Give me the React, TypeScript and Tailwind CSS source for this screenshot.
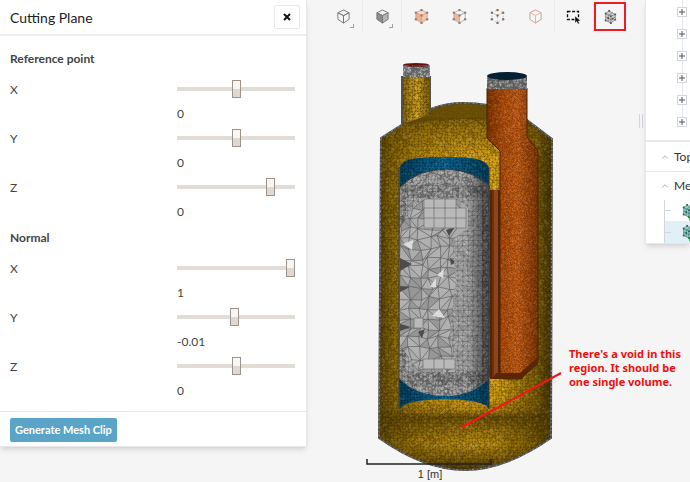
import { useState } from 'react';
import { ChevronUp } from 'lucide-react';

type Mesh = { lines: string; dark: string; light: string };

// Small seeded generator, so the mesh is the same on every render
function makeRandom(seed: number) {
	let s = seed;
	return () => {
		s = (s * 16807) % 2147483647;
		return s / 2147483647;
	};
}

function buildMesh(x0: number, y0: number, x1: number, y1: number, step: number, jitter: number, seed: number): Mesh {
	const rnd = makeRandom(seed);
	const cols = Math.ceil((x1 - x0) / step) + 1;
	const rows = Math.ceil((y1 - y0) / step) + 1;
	const points: string[][] = [];
	for (let r = 0; r < rows; r++) {
		const row: string[] = [];
		for (let c = 0; c < cols; c++) {
			const x = x0 + c * step + (rnd() - 0.5) * jitter * step;
			const y = y0 + r * step + (rnd() - 0.5) * jitter * step;
			row.push(`${x.toFixed(1)} ${y.toFixed(1)}`);
		}
		points.push(row);
	}
	const mesh: Mesh = { lines: '', dark: '', light: '' };
	for (let r = 0; r < rows - 1; r++) {
		for (let c = 0; c < cols - 1; c++) {
			const a = points[r][c];
			const b = points[r][c + 1];
			const d = points[r + 1][c];
			const e = points[r + 1][c + 1];
			const flip = rnd() > 0.5;
			mesh.lines += `M${d}L${a}L${b}` + (flip ? `M${a}L${e}` : `M${b}L${d}`);
			const triangles = flip ? [`M${a}L${b}L${e}Z`, `M${a}L${d}L${e}Z`] : [`M${a}L${b}L${d}Z`, `M${b}L${d}L${e}Z`];
			triangles.forEach((t) => {
				const v = rnd();
				if (v < 0.25) mesh.dark += t;
				else if (v > 0.72) mesh.light += t;
			});
		}
	}
	return mesh;
}

const goldMesh = buildMesh(376, 60, 556, 474, 3, 0.7, 11);
const orangeMesh = buildMesh(484, 84, 542, 384, 2, 0.6, 23);
const blueMesh = buildMesh(396, 154, 492, 412, 3, 0.5, 37);
const fineMesh = buildMesh(396, 60, 530, 400, 3, 0.8, 41);
const midMesh = buildMesh(398, 186, 494, 382, 5, 0.3, 59);
const coarseMesh = buildMesh(400, 198, 460, 372, 10, 0.6, 73);

const BODY = 'M381 138L403 124Q432 103 463 103Q500 103 527 120L552 139L551 438Q505 470 465 470Q424 470 379 438Z';
const CORE = 'M400 187Q418 169 447 169Q476 171 490 187V377Q474 396 445 396Q414 395 399 378Z';
const PIPE = 'M487 88H527V137L538 151V362L521 379H503L500 374V151L487 138Z';
const BLUE = 'M400 188V167Q402 159 420 158Q445 156 470 158Q488 160 489 169V188ZM399 375H489V409Q486 400 445 399Q402 400 400 409Z';
const SQUARES = 'M424 199H456V208H466V228H424ZM424 208H456M424 218H466M434 199V228M445 199V228M456 208V228M414 318H423V328H414ZM423 359H455V369H423ZM434 359V369M444 359V369';

function MeshFill({ mesh, clip, stroke, strokeWidth, strength }: {
	mesh: Mesh;
	clip: string;
	stroke: string;
	strokeWidth: number;
	strength: number;
}) {
	return (
		<g clipPath={`url(#${clip})`}>
			<path d={mesh.dark} fill="#000" opacity={strength} />
			<path d={mesh.light} fill="#fff" opacity={strength * 0.6} />
			<path d={mesh.lines} fill="none" stroke={stroke} strokeWidth={strokeWidth} />
		</g>
	);
}

function Vessel() {
	return (
		<svg viewBox="306 34 384 448" className="block h-[448px] w-[384px] max-w-none" role="img" aria-label="Clipped vessel mesh">
			<defs>
				<linearGradient id="gold" x1="379" x2="552" y1="0" y2="0" gradientUnits="userSpaceOnUse">
					<stop offset="0" stopColor="#5a4404" />
					<stop offset="0.08" stopColor="#8d6b06" />
					<stop offset="0.25" stopColor="#c8950c" />
					<stop offset="0.5" stopColor="#edb41a" />
					<stop offset="0.68" stopColor="#e6ad12" />
					<stop offset="0.9" stopColor="#8a6806" />
					<stop offset="1" stopColor="#443304" />
				</linearGradient>
				<linearGradient id="goldPipe">
					<stop offset="0" stopColor="#8a6808" />
					<stop offset="0.5" stopColor="#eab423" />
					<stop offset="1" stopColor="#7c5e08" />
				</linearGradient>
				<linearGradient id="orange" x1="487" x2="538" y1="0" y2="0" gradientUnits="userSpaceOnUse">
					<stop offset="0" stopColor="#8a3e05" />
					<stop offset="0.3" stopColor="#c85c0e" />
					<stop offset="0.6" stopColor="#e2701b" />
					<stop offset="1" stopColor="#8a3e06" />
				</linearGradient>
				<linearGradient id="blue" x1="399" x2="490" y1="0" y2="0" gradientUnits="userSpaceOnUse">
					<stop offset="0" stopColor="#054565" />
					<stop offset="0.5" stopColor="#0b72a6" />
					<stop offset="1" stopColor="#054565" />
				</linearGradient>
				<linearGradient id="coreShade" x1="399" x2="490" y1="0" y2="0" gradientUnits="userSpaceOnUse">
					<stop offset="0.75" stopColor="#000" stopOpacity="0" />
					<stop offset="0.92" stopColor="#000" stopOpacity="0.4" />
					<stop offset="1" stopColor="#000" stopOpacity="0.4" />
				</linearGradient>
				<linearGradient id="floor" x1="0" x2="0" y1="395" y2="470" gradientUnits="userSpaceOnUse">
					<stop offset="0" stopColor="#5d4503" stopOpacity="0" />
					<stop offset="0.2" stopColor="#5d4503" stopOpacity="0.3" />
					<stop offset="0.3" stopColor="#5d4503" stopOpacity="0.85" />
					<stop offset="0.42" stopColor="#5d4503" stopOpacity="0.6" />
					<stop offset="0.65" stopColor="#5d4503" stopOpacity="0.25" />
					<stop offset="1" stopColor="#463402" stopOpacity="0.95" />
				</linearGradient>
				<linearGradient id="crown" x1="0" x2="0" y1="118" y2="160" gradientUnits="userSpaceOnUse">
					<stop offset="0" stopColor="#6e5203" stopOpacity="0.75" />
					<stop offset="1" stopColor="#6e5203" stopOpacity="0" />
				</linearGradient>
				<clipPath id="bodyClip"><path d={BODY} /></clipPath>
				<clipPath id="neckClip"><path d="M402 77H431V114L403 124Z" /></clipPath>
				<clipPath id="coreClip"><path d={CORE} /></clipPath>
				<clipPath id="pipeClip"><path d={PIPE} /></clipPath>
				<clipPath id="blueClip"><path d={BLUE} /></clipPath>
				<clipPath id="capClip"><path d="M403 65H430V77H403ZM487 77H527V89H487Z" /></clipPath>
				<clipPath id="coarseClip"><path d="M400 228L413 208L424 198H456L468 208V228L452 240L456 280L450 330L456 372H420L400 345Z" /></clipPath>
			</defs>

			{/* Outer shell */}
			<path d={BODY} fill="url(#gold)" />
			<path d="M379 118H552V160H379Z" fill="url(#crown)" clipPath="url(#bodyClip)" />
			<path d="M379 395H552V470H379Z" fill="url(#floor)" clipPath="url(#bodyClip)" />
			<MeshFill mesh={goldMesh} clip="bodyClip" stroke="rgba(45,32,0,0.4)" strokeWidth={0.6} strength={0.13} />
			<path d="M402 125Q432 104 463 103Q500 103 527 120L534 128Q505 119 470 119Q425 119 402 125Z" fill="#5a4403" opacity="0.85" />
			<path d={BODY} fill="none" stroke="#4b4a46" strokeWidth="2" />
			<path d={BODY} fill="none" stroke="#999" strokeWidth="1" strokeDasharray="1 3 2 2" />

			{/* Left neck */}
			<path d="M402 77H431V114L403 124Z" fill="url(#goldPipe)" />
			<MeshFill mesh={goldMesh} clip="neckClip" stroke="rgba(45,32,0,0.5)" strokeWidth={0.6} strength={0.13} />
			<path d="M402 76V124M430 76V113" stroke="#555147" strokeWidth="2" />
			<path d="M403 65H430V77H403Z" fill="#b0b0b0" />
			<ellipse cx="416" cy="65" rx="13" ry="2" fill="#6d1010" />

			{/* Jacket and core */}
			<path d={BLUE} fill="url(#blue)" />
			<MeshFill mesh={blueMesh} clip="blueClip" stroke="rgba(0,22,38,0.5)" strokeWidth={0.6} strength={0.1} />
			<path d={CORE} fill="#adadad" />
			<MeshFill mesh={fineMesh} clip="coreClip" stroke="rgba(60,60,60,0.5)" strokeWidth={0.5} strength={0.3} />
			<path d="M406 198H482V372H406Z" fill="#b4b4b4" opacity="0.7" />
			<MeshFill mesh={midMesh} clip="coreClip" stroke="rgba(75,75,75,0.6)" strokeWidth={0.6} strength={0.08} />
			<g clipPath="url(#coarseClip)">
				<path d={CORE} fill="#acacac" />
				<MeshFill mesh={coarseMesh} clip="coreClip" stroke="#606060" strokeWidth={0.7} strength={0.12} />
				<path d="M400 258l12 6l-12 7zM400 286l10 1l-10 5zM400 324l11 3l-11 4zM446 230l9-3l-6 9zM450 258l6 4l-5 3zM418 332l7-3l-3 9z" fill="#4c4c4c" />
				<path d="M403 244l10-4l-1 10zM437 275l7-6l-1 9zM430 287l6-9v9zM432 316l7-7l6 9z" fill="#dcdcdc" />
			</g>
			<path d={SQUARES} fill="#b9b9b9" stroke="#707070" strokeWidth="0.7" />
			<path d={CORE} fill="url(#coreShade)" />
			<path d="M400 187Q418 169 447 169Q476 171 490 187" fill="none" stroke="#333" strokeWidth="1" />
			<path d="M399 167V409M489 167V409" stroke="#3d3d3d" strokeWidth="1" />

			{/* Right pipe */}
			<path d="M490 190H501V374L506 379H490Z" fill="#6d3009" />
			<path d="M496 190V378" stroke="#8d4520" strokeWidth="4" />
			<path d="M491 190V378M499 190V378" stroke="#3e1901" strokeWidth="1" />
			<path d={PIPE} fill="url(#orange)" />
			<MeshFill mesh={orangeMesh} clip="pipeClip" stroke="rgba(70,25,0,0.4)" strokeWidth={0.5} strength={0.14} />
			<path d={PIPE} fill="none" stroke="#4d2204" strokeWidth="1" />
			<path d="M538 357L520 373H496L492 379H521L538 364Z" fill="#5a2605" />
			<path d="M487 77H527V89H487Z" fill="#a2a2a2" />
			<MeshFill mesh={fineMesh} clip="capClip" stroke="#555" strokeWidth={0.6} strength={0.4} />
			<ellipse cx="507" cy="76" rx="20" ry="4" fill="#062033" />

			{/* Scale */}
			<path d="M367 459V464H491V459" fill="none" stroke="#222" strokeWidth="1.5" />
			<text x="430" y="478" textAnchor="middle" fontFamily="Liberation Sans, sans-serif" fontSize="11" fill="#333">1 [m]</text>

			<path d="M462 427L561 373" stroke="#f5141e" strokeWidth="2" />
		</svg>
	);
}

const NODES = [[8, 1], [14, 4], [14, 11], [8, 15], [2, 11], [2, 4], [8, 7]];

function Cube({ top = 'none', left = 'none', right = 'none', stroke = '#777', nodes, dashed = false }: {
	top?: string;
	left?: string;
	right?: string;
	stroke?: string;
	nodes?: string;
	dashed?: boolean;
}) {
	return (
		<svg viewBox="0 0 16 16" className="size-[15px]" aria-hidden="true">
			<g stroke={stroke} strokeWidth="1" strokeLinejoin="round" strokeDasharray={dashed ? '2 2' : undefined}>
				<path d="M8 1L14 4L8 7L2 4Z" fill={top} />
				<path d="M2 4L8 7V15L2 11Z" fill={left} />
				<path d="M14 4L8 7V15L14 11Z" fill={right} />
			</g>
			{nodes && NODES.map(([x, y]) => <circle key={`${x}-${y}`} cx={x} cy={y} r="1.3" fill={nodes} />)}
		</svg>
	);
}

function EdgesIcon() {
	return (
		<svg viewBox="0 0 16 16" className="size-[15px]" aria-hidden="true">
			<path d="M8 1L14 4V11L8 15L2 11V4Z" fill="none" stroke="#b9aaa2" strokeLinejoin="round" />
			<path d="M2 4L8 7L14 4M8 7V15M8 1L2 4M14 11L8 15" fill="none" stroke="#f0ad8c" strokeLinejoin="round" />
		</svg>
	);
}

function SelectIcon() {
	return (
		<svg viewBox="0 0 16 16" className="size-4" aria-hidden="true">
			<rect x="1.5" y="3.5" width="11" height="8" fill="none" stroke="#111" strokeWidth="1.3" strokeDasharray="3 1.6" />
			<path d="M9 8V15L10.8 13.5L12 16L13.4 15.3L12.3 13H14.5Z" fill="#111" stroke="#f5f5f5" strokeWidth="0.4" />
		</svg>
	);
}

function MeshCubeIcon({ fill = '#cfcfcf', stroke = '#555' }: { fill?: string; stroke?: string }) {
	return (
		<svg viewBox="0 0 16 16" className="size-[14px]" aria-hidden="true">
			<path d="M7 1L14 5V11L9 15L3 12V4Z" fill={fill} />
			<path d="M7 1L14 5V11L9 15L3 12V4ZM3 4L9 7L14 5M9 7V15M3 8L9 11L14 8M6 6V13M11 3L6 6" fill="none" stroke={stroke} strokeWidth="0.6" />
			{[[7, 1], [14, 5], [14, 11], [9, 15], [3, 12], [3, 4], [9, 7], [6, 9], [11, 10]].map(([x, y]) => (
				<circle key={`${x}-${y}`} cx={x} cy={y} r="1.1" fill={stroke} />
			))}
		</svg>
	);
}

const toolButton = 'relative flex h-8 w-[38px] shrink-0 items-center justify-center';

function Corner() {
	return <span className="absolute right-2 bottom-1 size-[4px] border-r border-b border-gray-400" />;
}

function Toolbar() {
	return (
		<div className="flex h-[34px] items-start pl-[18px]">
			<button type="button" aria-label="Wireframe" className={toolButton}>
				<Cube />
				<Corner />
			</button>
			<span className="h-8 w-px shrink-0 bg-[#ececec]" />
			<button type="button" aria-label="Shaded" className={toolButton}>
				<Cube top="#eee" left="#8c8c8c" right="#b5b5b5" />
				<Corner />
			</button>
			<span className="h-8 w-px shrink-0 bg-[#ececec]" />
			<button type="button" aria-label="Select volumes" className={toolButton}>
				<Cube top="#f8d9c8" left="#f2b18f" right="#f6c4aa" stroke="#e0a384" nodes="#858585" />
			</button>
			<button type="button" aria-label="Select faces" className={toolButton}>
				<Cube left="#f5b594" stroke="#b5b5b5" nodes="#858585" />
			</button>
			<button type="button" aria-label="Select nodes" className={toolButton}>
				<Cube stroke="#f0b598" nodes="#777" dashed />
			</button>
			<button type="button" aria-label="Select edges" className={toolButton}>
				<EdgesIcon />
			</button>
			<span className="h-8 w-px shrink-0 bg-[#ececec]" />
			<button type="button" aria-label="Box selection" className={toolButton}>
				<SelectIcon />
			</button>
			<span className="h-8 w-px shrink-0 bg-[#ececec]" />
			<button type="button" aria-label="Mesh clip" className="mt-0.5 flex h-[29px] w-8 shrink-0 items-center justify-center border-2 border-[#ed1c24]">
				<MeshCubeIcon />
			</button>
		</div>
	);
}

type SliderItem = { axis: string; position: number; value: string };

const referencePoint: SliderItem[] = [
	{ axis: 'X', position: 50, value: '0' },
	{ axis: 'Y', position: 50, value: '0' },
	{ axis: 'Z', position: 82, value: '0' },
];

const normal: SliderItem[] = [
	{ axis: 'X', position: 100, value: '1' },
	{ axis: 'Y', position: 49, value: '-0.01' },
	{ axis: 'Z', position: 50, value: '0' },
];

function SliderRow({ id, item }: { id: string; item: SliderItem }) {
	const [position, setPosition] = useState(item.position);

	return (
		<div className="flex h-[49px] justify-between">
			<label htmlFor={id} className="pt-px leading-5">{item.axis}</label>
			<div className="w-[118px]">
				<input
					id={id}
					type="range"
					min={0}
					max={100}
					value={position}
					onChange={(e) => setPosition(Number(e.target.value))}
					className="block h-5 w-full appearance-none bg-transparent [&::-webkit-slider-runnable-track]:h-1 [&::-webkit-slider-runnable-track]:bg-[#e2dcd6] [&::-webkit-slider-thumb]:-mt-[7px] [&::-webkit-slider-thumb]:h-[18px] [&::-webkit-slider-thumb]:w-[9px] [&::-webkit-slider-thumb]:appearance-none [&::-webkit-slider-thumb]:border [&::-webkit-slider-thumb]:border-[#9c948b] [&::-webkit-slider-thumb]:bg-linear-to-b [&::-webkit-slider-thumb]:from-[#f8f6f4] [&::-webkit-slider-thumb]:from-50% [&::-webkit-slider-thumb]:to-[#e0d9d3] [&::-webkit-slider-thumb]:to-50%"
				/>
				<output htmlFor={id} className="mt-[5px] block leading-5">{item.value}</output>
			</div>
		</div>
	);
}

function CuttingPlanePanel() {
	return (
		<aside className="w-[307px] shrink-0 self-start border-r border-b border-gray-200 bg-white text-[12px] text-[#444] shadow-md">
			<div className="flex h-9 items-center justify-between border-b-2 border-[#eeeeee] pr-1.5 pl-2.5">
				<h2 className="text-[14px] text-[#222]">Cutting Plane</h2>
				<button type="button" aria-label="Close" className="flex h-6 w-[26px] items-center justify-center rounded-xs border border-gray-200">
					<svg viewBox="0 0 8 8" className="size-2" aria-hidden="true">
						<path d="M1 1L7 7M7 1L1 7" stroke="#111" strokeWidth="2" />
					</svg>
				</button>
			</div>
			<div className="pr-[11px] pl-2.5">
				<h3 className="pt-[13px] pb-2.5 leading-5 font-bold">Reference point</h3>
				{referencePoint.map((item) => (
					<SliderRow key={item.axis} id={`reference-${item.axis}`} item={item} />
				))}
				<h3 className="pt-0.5 pb-2.5 leading-5 font-bold">Normal</h3>
				{normal.map((item) => (
					<SliderRow key={item.axis} id={`normal-${item.axis}`} item={item} />
				))}
			</div>
			<div className="mt-[6px] border-t border-gray-200 px-2.5 pt-1.5 pb-1">
				<button type="button" className="h-6 rounded-xs bg-[#5aa5c7] px-[5px] text-[11px] font-bold whitespace-nowrap text-white">
					Generate Mesh Clip
				</button>
			</div>
		</aside>
	);
}

function TreePanel() {
	return (
		<aside className="w-[45px] shrink-0 self-start overflow-hidden border-b border-l border-gray-200 bg-white text-[12px] text-[#333] shadow-md">
			<div className="flex h-[140px] flex-col pl-[31px]">
				{[0, 1, 2, 3, 4, 5].map((n) => (
					<div key={n} className="flex w-[10px] flex-col items-center">
						<span className={n === 0 ? 'h-[7px] w-px bg-gray-200' : 'h-3 w-px bg-gray-200'} />
						<button type="button" aria-label="Expand" className="flex size-[10px] items-center justify-center border border-gray-300">
							<svg viewBox="0 0 6 6" className="size-[6px]" aria-hidden="true">
								<path d="M0 3H6M3 0V6" stroke="#555" />
							</svg>
						</button>
					</div>
				))}
			</div>
			<div className="flex h-[31px] items-center gap-1 border-t-2 border-gray-200 pl-3.5">
				<ChevronUp className="size-2.5 shrink-0 text-gray-400" />
				<span>Top</span>
			</div>
			<div className="flex h-[29px] items-center gap-1 border-t border-gray-200 pl-3.5">
				<ChevronUp className="size-2.5 shrink-0 text-gray-400" />
				<span>Me</span>
			</div>
			<div className="ml-[18px] border-l border-gray-300">
				{[false, true].map((selected) => (
					<div key={String(selected)} className={selected ? 'flex h-[22px] items-center bg-[#e1f0f7]' : 'flex h-[21px] items-center'}>
						<span className="mr-2.5 h-px w-1.5 shrink-0 bg-gray-300" />
						<span className="relative shrink-0">
							<MeshCubeIcon fill="#8fd3c8" stroke="#315d58" />
							<span className="absolute -right-0.5 -bottom-1 size-2 rounded-full bg-[#1fa045]" />
						</span>
					</div>
				))}
			</div>
		</aside>
	);
}

export default function App() {
	return (
		<div className="flex min-h-screen overflow-hidden bg-[#f5f5f5] font-['Lato',sans-serif]">
			<CuttingPlanePanel />
			<main className="relative -ml-px min-w-0 flex-1">
				<Toolbar />
				<Vessel />
				<p className="absolute top-[347px] left-[263px] font-['Noto_Sans',sans-serif] text-[11px] leading-[14px] font-bold whitespace-nowrap text-[#ed1111]">
					There's a void in this
					<br />
					region. It should be
					<br />
					one single volume.
				</p>
			</main>
			<div className="flex w-[6px] shrink-0 justify-start gap-0.5 pt-[114px]">
				<span className="h-3.5 w-px bg-gray-300" />
				<span className="h-3.5 w-px bg-gray-300" />
			</div>
			<TreePanel />
		</div>
	);
}
